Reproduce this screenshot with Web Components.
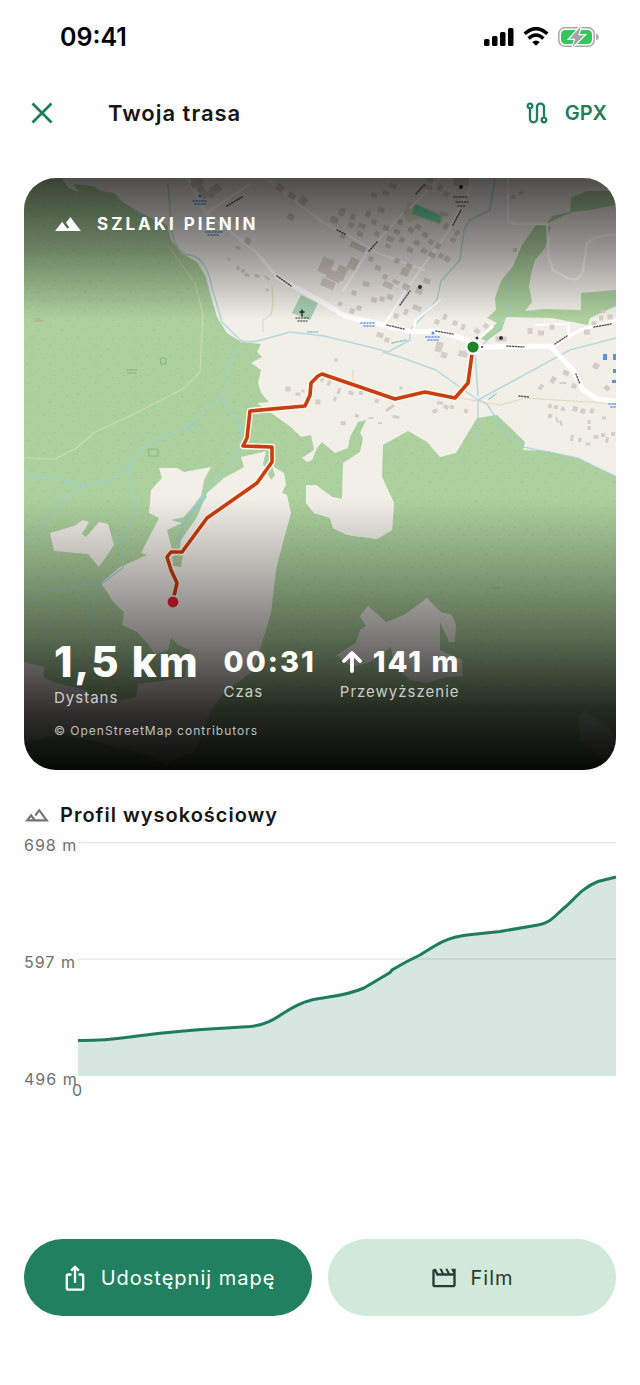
<!DOCTYPE html>
<html lang="pl">
<head>
<meta charset="utf-8">
<meta name="viewport" content="width=device-width, initial-scale=1">
<title>Twoja trasa</title>
<style>
  body { margin: 0; background: #fefefe; color: #151716; font-family: Inter, "Liberation Sans", sans-serif; }
</style>
</head>
<body>
<route-screen></route-screen>

<template id="route-screen">
  <style>
    :host { display: flex; flex-direction: column; min-height: 100vh; }
    main { display: flex; flex-direction: column; padding: 25px 24px 24px; }
    elevation-profile { margin-top: 31px; }
    footer { display: grid; grid-template-columns: 1fr 1fr; gap: 16px; margin-top: auto; padding: 0 24px 69px; }
  </style>
  <status-bar time="09:41"></status-bar>
  <app-bar>Twoja trasa</app-bar>
  <main>
    <route-card>
      <span slot="brand">SZLAKI PIENIN</span>
      <route-stat slot="stats" size="large" label="Dystans">1,5 km</route-stat>
      <route-stat slot="stats" label="Czas">00:31</route-stat>
      <route-stat slot="stats" label="Przewyższenie" climb>141 m</route-stat>
      <span slot="credit">© OpenStreetMap contributors</span>
    </route-card>
    <elevation-profile>Profil wysokościowy</elevation-profile>
  </main>
  <footer>
    <pill-button icon="share">Udostępnij mapę</pill-button>
    <pill-button icon="film" tone="soft">Film</pill-button>
  </footer>
</template>

<template id="status-bar">
  <style>
    :host { display: flex; justify-content: space-between; align-items: center; height: 73px; padding: 0 41px 0 60px; color: #000; }
    time { font-size: 25px; line-height: 28px; font-weight: 600; }
    div { display: flex; align-items: center; gap: 9px; }
    svg { display: block; }
  </style>
  <time></time>
  <div>
    <svg width="30" height="20" viewBox="0 0 30 20" aria-hidden="true">
      <rect x="0" y="12" width="5.5" height="7" rx="1.5"/><rect x="8" y="9" width="5.5" height="10" rx="1.5"/>
      <rect x="16" y="5" width="5.5" height="14" rx="1.5"/><rect x="24" y="1" width="5.5" height="18" rx="1.5"/>
    </svg>
    <svg width="26" height="20" viewBox="0 0 26 20" aria-hidden="true" fill="none" stroke="#000" stroke-width="3.4">
      <path d="M1.6 6.8Q13-3.6 24.4 6.8M5.6 11.4Q13 4.8 20.4 11.4"/><path d="M13 18.8L9.200 15.100Q13 12 16.800 15.100Z" fill="#000" stroke="none"/>
    </svg>
    <svg width="41" height="20" viewBox="0 0 41 20" aria-hidden="true">
      <rect x=".8" y=".8" width="35.4" height="18.4" rx="6" fill="none" stroke="#a5aaa5" stroke-width="1.5"/>
      <path d="M38.2 6.5Q40.8 7.2 40.8 10T38.2 13.5Z" fill="#a5aaa5"/>
      <rect x="3" y="3" width="31" height="14" rx="4.200" fill="#35c759"/>
      <path d="M22.600 -.5L11.500 11.800H17.200L14.600 20L26.200 8.200H20.400Z" fill="#a5a5a7" stroke="#fff" stroke-width="2.4" paint-order="stroke"/>
    </svg>
  </div>
</template>

<template id="app-bar">
  <style>
    :host { display: block; --brand: #1f7d5d; }
    header { display: flex; align-items: center; height: 80px; padding: 0 33px 0 24px; }
    button { display: flex; align-items: center; gap: 14px; margin: 0; padding: 0; border: 0; background: none; color: var(--brand); font: 600 20px/28px Inter, "Liberation Sans", sans-serif; cursor: pointer; }
    .close { width: 84px; height: 36px; }
    h1 { flex: 1; margin: 0; font-size: 22px; line-height: 28px; font-weight: 600; letter-spacing: 1px; }
  </style>
  <header>
    <button class="close" type="button" aria-label="Zamknij">
      <svg width="36" height="36" viewBox="0 0 36 36" fill="none" stroke="currentColor" stroke-width="2.7"><path d="M8.500 8.500L27.500 27.500M27.500 8.500L8.500 27.500"/></svg>
    </button>
    <h1><slot></slot></h1>
    <button type="button">
      <svg width="28" height="28" viewBox="0 0 24 24" fill="currentColor"><path d="M19 15.18V7c0-2.21-1.79-4-4-4s-4 1.79-4 4v10c0 1.1-.9 2-2 2s-2-.9-2-2V8.82C8.16 8.4 9 7.3 9 6c0-1.66-1.34-3-3-3S3 4.34 3 6c0 1.3.84 2.4 2 2.82V17c0 2.21 1.79 4 4 4s4-1.79 4-4V7c0-1.1.9-2 2-2s2 .9 2 2v8.18A2.996 2.996 0 0 0 18 21c1.66 0 3-1.34 3-3 0-1.3-.84-2.4-2-2.82zM6 7c-.55 0-1-.45-1-1s.45-1 1-1 1 .45 1 1-.45 1-1 1zm12 12c-.55 0-1-.45-1-1s.45-1 1-1 1 .45 1 1-.45 1-1 1z"/></svg>
      GPX
    </button>
  </header>
</template>

<template id="route-card">
  <style>
    :host { display: grid; border-radius: 32px; overflow: hidden; color: #fff; }
    trail-map, .over { grid-area: 1 / 1; min-width: 0; }
    .over { position: relative; display: flex; flex-direction: column; padding: 32px 30px 28px;
      background: linear-gradient(rgba(0,0,0,.68) 0%, rgba(0,0,0,.38) 12%, rgba(0,0,0,0) 24%, rgba(0,0,0,0) 54%, rgba(0,0,0,.24) 66%, rgba(0,0,0,.5) 78%, rgba(0,0,0,.8) 90%, rgba(0,0,0,.96) 100%); }
    .brand { display: flex; align-items: center; gap: 15px; font-size: 17px; line-height: 28px; font-weight: 700; letter-spacing: 3px; }
    .stats { display: flex; align-items: center; gap: 24px; margin-top: auto; }
    .credit { margin-top: 9px; font-size: 12px; line-height: 22px; letter-spacing: 1px; color: rgba(255,255,255,.72); }
  </style>
  <trail-map></trail-map>
  <div class="over">
    <div class="brand">
      <svg width="28" height="28" viewBox="0 0 24 24" fill="#fff" aria-hidden="true"><path d="M14 6l-3.75 5 2.85 3.8-1.6 1.2C9.81 13.75 7 10 7 10l-6 8h22L14 6z"/></svg>
      <slot name="brand"></slot>
    </div>
    <div class="stats"><slot name="stats"></slot></div>
    <div class="credit"><slot name="credit"></slot></div>
  </div>
</template>

<template id="route-stat">
  <style>
    :host { display: flex; flex-direction: column; white-space: nowrap; }
    .value { display: flex; align-items: center; gap: 11px; font-size: 29px; line-height: 34px; font-weight: 800; letter-spacing: 2px; }
    :host([size="large"]) .value { font-size: 42px; line-height: 46px; }
    .label { font-size: 15px; line-height: 26px; letter-spacing: 1px; color: rgba(255,255,255,.75); }
    svg { display: none; }
    :host([climb]) svg { display: block; }
  </style>
  <div class="value">
    <svg width="22" height="24" viewBox="0 0 22 24" fill="none" stroke="#fff" stroke-width="3.8" stroke-linecap="round" stroke-linejoin="round" aria-hidden="true"><path d="M12 21V4M4 11L12 3L20 11"/></svg>
    <span><slot></slot></span>
  </div>
  <div class="label"></div>
</template>

<template id="trail-map">
  <style>
    :host { display: block; }
    svg { display: block; width: 100%; height: auto; }
  </style>
  <svg viewBox="24 178 592 592" role="img" aria-label="Mapa trasy" fill="none" stroke-linejoin="round" stroke-linecap="round">
    <defs>
      <pattern id="trees" width="23" height="19" patternUnits="userSpaceOnUse">
        <path d="M3 4l1-2 1 2zM15 8l1-2 1 2zM8 15l1-2 1 2zM20 17l1-2 1 2z" fill="#9ac68e"/>
      </pattern>
      <path id="wood" d="M24 178H62L68 188L79 192L73 184L92 186L104 192L102 200L93 216L93 204L96 190L114 193L124 203L141 213L167 225L171 240L181 253L197 262L206 277L211 297L217 317L227 333L241 342L261 344L257 352L262 357L251 363L261 370L258 383L261 393L269 402L257 403L271 413L291 427L301 437L311 435L314 450L302 458L307 462L312 460L317 448L322 442L335 453L348 448L350 437L358 422L366 420L360 433L363 438L360 452L343 463L342 499L332 497L316 485H306V503L314 513L330 518L333 528L347 535L377 539L392 530L394 503L382 477L383 445L408 431L427 442L440 457L456 453L477 418L497 415L525 442L523 450L547 451L577 458L616 476V770H24Z"/>
      <path id="east" d="M545 226L552 216L570 212L571 198L587 191H616V205L590 210L572 212L550 222ZM536 225L551 226L545 248L535 260L531 274L529 286L532 302L525 311L545 309L581 310V293L616 290V306L590 318L588 325L552 318L506 317L502 330L486 341L480 338L497 323L487 318L496 310L495 298L501 281L513 266L522 245Z"/>
      <path id="route" d="M473 347L468 383L455 398L425 392L395 399L322 374L318 376L311 383L310 395L305 406L250 411L247 438L243 446L272 447V462L257 483L207 518L182 552L171 552L167 557L171 570L177 583L174 596"/>
    </defs>
    <rect x="24" y="178" width="592" height="592" fill="#f2efe9"/>
    <use href="#wood" fill="#add19e"/><use href="#wood" fill="url(#trees)"/>
    <use href="#east" fill="#add19e"/>
    <path d="M301 295L318 303L310 320L292 313Z" fill="#a9cfb2"/>
    <path d="M403 213L408 202L445 214L440 225L420 218L408 222Z" fill="#e3dfc4"/>
    <path d="M415 204L441 216L440 223L412 214Z" fill="#74dfb1"/>

    <g fill="#f2efe9">
      <path d="M306 485L316 485L332 497L342 499L360 470L382 477L394 503L392 530L377 539L347 535L333 528L330 518L314 513L306 503Z"/>
      <path d="M241 457L271 450L274 467L284 473L286 485L282 493L287 495L291 513L281 550L276 570L271 613L254 670L224 693L210 712L196 750L165 765L150 756L100 742L60 734L24 742V662L44 667V678L60 684L86 690L90 697L122 700L136 697L138 684L184 678L190 650L178 645L171 638L168 650L155 654L147 643L137 632L122 625L124 612L114 603L107 592L101 583L120 567L147 555L141 553L159 518L149 513L151 490L162 478L159 468L177 468L184 472L211 467L204 480L201 497L184 517L171 520L182 523L167 530L172 550L178 560L181 540L197 517L207 493L224 478L244 467Z"/>
      <path d="M50 533L74 526L83 520L89 522L82 534L86 537L99 522L108 524L114 545L99 567L88 554L54 551Z"/>
      <path d="M336 655L356 643L360 630L366 626L360 616L368 606L386 622L404 615L427 598L441 612L452 615L456 625L455 642L449 642L440 622L440 650L462 660L463 676L445 677L427 683L410 680L395 667L391 647L370 662L352 667Z"/>
      <path d="M578 718L585 711L611 730L616 738V760L600 758L580 740Z" opacity=".65"/>
    </g>
    <path d="M266 451L263 464L271 480L275 475L272 466L271 450ZM172 556L183 555L181 567L173 566Z" fill="#add19e"/>

    <g stroke="#9fd0d6" stroke-width="1.5" opacity=".7">
      <path d="M168 184L171 225Q174 254 190 255Q207 258 212 288L222 322L240 340Q248 344 265 339L290 332L324 336L370 347L388 352L410 340L410 330L423 316L437 300L441 281L460 260L464 230L470 220L490 210L495 178"/>
      <path d="M383 352L400 357L436 370L478 400L487 404L503 430L523 447L578 458L616 477M478 400L535 369L570 350L616 338M478 396L475 352L492 336L508 314L512 298L507 280L513 267M478 400V440"/>
      <path d="M237 347L228 367L227 386L220 398L205 410L187 427L144 446L128 468L112 480L86 485L65 498L40 525L25 542M25 479L40 477L86 484M220 399L239 421L242 438L239 452L225 470L210 485L197 502L184 523L178 544M129 467L136 510L121 540L123 568L97 587L93 600L94 650M24 606L48 591L96 583M60 603L36 650"/>
      <path d="M514 646L540 636L570 635L590 628L616 626" opacity=".4"/>
    </g>
    <path d="M205 497L184 523L178 543M187 428L193 424" stroke="#9dccc0" stroke-width="3"/>
    <path d="M168 246L195 283L203 315L200 372L183 389L130 416L95 432L75 449L55 459L24 458M459 398L500 405L525 398L620 404M353 370V382M272 286L273 303L271 315L263 320V332" stroke="#dbd9ae" stroke-width="1.200" opacity=".8"/>

    <g stroke="#fff">
      <path d="M320 221L350 236L375 252L424 270M403 213L366 254L343 291M470 188L458 210L448 232L420 270L404 293L384 325M508 178V222L516 224H547L549 258L553 270L567 278Q580 283 583 270L587 243L597 237L616 234M265 178L300 205L322 221M206 213L250 184M440 178L410 208M413 332L416 320L440 300M536 325L569 324L568 335L555 346" stroke-width="2.200"/>
      <path d="M188 178L206 213L237 237L257 253L277 277" stroke-width="3"/>
      <path d="M277 277L324 303L345 316L383 325L413 332L437 331L462 338L473 344L483 347L550 346L573 370L583 390L597 399L620 402" stroke-width="5"/>
      <path d="M555 345L580 330L616 320M475 342L492 327" stroke-width="3"/>
    </g>

    <g id="houses" fill="#d6cdc6"></g>
    <g stroke="#454545" stroke-width="1.500" stroke-dasharray="1 1.800" opacity=".9">
      <path d="M277 276L291 286M387 325L404 329M436 331L453 334M507 346L524 347M400 305L410 291M555 344L567 336M594 327L611 324M519 396L529 397M576 374L580 384M227 206L242 197M337 230L345 234M369 251L377 242M416 194L425 184M453 225L461 210"/>
    </g>
    <path d="M302 310V316M300 312H304" stroke="#222" stroke-width="1.400"/>
    <path d="M296 318H309M298 321H307M454 197H466M456 202H468M458 206H465" stroke="#474747" stroke-width="1.500" stroke-dasharray="1 1.800" opacity=".8"/>
    <g fill="#333">
      <circle cx="461" cy="187" r="2"/><circle cx="420" cy="287" r="2"/><circle cx="501" cy="338" r="2"/><circle cx="477" cy="338" r="1.500"/><circle cx="482" cy="347" r="1"/>
    </g>
    <g stroke="#5c8fdd" stroke-width="1.600" stroke-dasharray="1 2">
      <path d="M193 201H207M195 204H205M206 232H222M208 235H220M361 323H376M364 326H374M426 337H440M428 340H438M609 404H616M611 407H616"/>
    </g>
    <g fill="#5c8fdd">
      <circle cx="200" cy="196" r="1.500"/><circle cx="214" cy="229" r="1.500"/><circle cx="433" cy="333" r="1.500"/>
      <path d="M603 354h4v6h-4zM613 354h3v6h-3zM613 369h3v4h-3zM612 380h4v3h-4z"/>
    </g>
    <g stroke="#84c5be" stroke-width="1.500" stroke-dasharray="1 1.800"><path d="M308 332H319M392 343L406 340M489 399L496 394"/></g>
    <g stroke="#6eac77" stroke-width="1" opacity=".65"><rect x="149" y="449" width="9" height="7"/><rect x="161" y="358" width="5" height="6"/></g>
    <path d="M127 370H137M128 373H136" stroke="#886" stroke-width="1" opacity=".6"/>
    <path d="M34 321H42M36 319H40M492 588H500" stroke="#c38b77" stroke-width="1" opacity=".7"/>

    <use href="#route" stroke="#fff6e8" stroke-width="6.500"/>
    <use href="#route" stroke="#c83d12" stroke-width="3.600"/>
    <circle cx="473" cy="347" r="8" fill="#fff"/><circle cx="473" cy="347" r="5.600" fill="#1f8326"/>
    <circle cx="173" cy="602" r="7" fill="#f2efe9"/><circle cx="173" cy="602" r="5.400" fill="#f3242c"/>
  </svg>
</template>

<template id="elevation-profile">
  <style>
    :host { display: block; color: #6b716f; }
    h2 { display: flex; align-items: center; gap: 10px; margin: 0; color: #151716; font-size: 20px; line-height: 28px; font-weight: 600; letter-spacing: 1px; }
    h2 svg { color: #6f7774; }
    .chart { display: grid; grid-template-columns: 54px minmax(0, 1fr); margin-top: 13px; font-size: 16px; letter-spacing: 1px; }
    .scale { display: flex; flex-direction: column; justify-content: space-between; height: 240px; line-height: 6px; white-space: nowrap; }
    .plot { display: block; width: 100%; height: 234px; }
    .origin { grid-column: 2; margin-left: -6px; line-height: 16px; }
  </style>
  <h2>
    <svg width="26" height="26" viewBox="0 0 24 24" fill="currentColor" aria-hidden="true"><path d="M14 6l-4.22 5.63 1.25 1.67L14 9.33 19 16h-8.46l-4.01-5.37L1 18h22L14 6zM5 16l1.52-2.03L8.04 16H5z"/></svg>
    <slot></slot>
  </h2>
  <div class="chart">
    <div class="scale"><span>698 m</span><span>597 m</span><span>496 m</span></div>
    <svg class="plot" viewBox="78 842 538 234" preserveAspectRatio="none" role="img" aria-label="Wykres wysokości" overflow="visible">
      <path d="M78 842.500H616M78 959H616" stroke="#e6e8e7" stroke-width="1.400"/>
      <path d="M78 1040.500C112 1041 125 1037 150 1034.500S190 1030 210 1029L250 1026.500C278 1024 284 1007 310 1000.500C328 996 343 997 364 988L390 972.500L392 970L406 962L420 955C434 947 443 938 467 935L500 931.500L538 925C551 923 554 916 567 905.500C577 896 584 887 598 881.500L616 877V1076H78Z" fill="#1f7d5d" fill-opacity=".18"/>
      <path d="M78 1040.500C112 1041 125 1037 150 1034.500S190 1030 210 1029L250 1026.500C278 1024 284 1007 310 1000.500C328 996 343 997 364 988L390 972.500L392 970L406 962L420 955C434 947 443 938 467 935L500 931.500L538 925C551 923 554 916 567 905.500C577 896 584 887 598 881.500L616 877" fill="none" stroke="#1f7d5d" stroke-width="3"/>
    </svg>
    <span class="origin">0</span>
  </div>
</template>

<template id="pill-button">
  <style>
    :host { display: block; }
    button { display: flex; align-items: center; justify-content: center; gap: 12px; width: 100%; height: 77px; margin: 0; padding: 0; border: 0; border-radius: 39px; background: #208060; color: #fff; font: 400 20px/28px Inter, "Liberation Sans", sans-serif; letter-spacing: 1px; cursor: pointer; }
    :host([tone="soft"]) button { background: #d0e9da; color: #293c32; }
    svg { display: none; }
    :host([icon="share"]) .share, :host([icon="film"]) .film { display: block; }
  </style>
  <button type="button">
    <svg class="share" width="28" height="28" viewBox="0 0 24 24" fill="currentColor"><path d="M16 5l-1.420 1.420-1.590-1.590V16h-1.980V4.830L9.420 6.420 8 5l4-4 4 4zm4 5v11c0 1.100-.9 2-2 2H6c-1.110 0-2-.9-2-2V10c0-1.110.89-2 2-2h3v2H6v11h12V10h-3V8h3c1.100 0 2 .89 2 2z"/></svg>
    <svg class="film" width="28" height="28" viewBox="0 0 24 24" fill="currentColor"><path d="M4 6.470L5.760 10H20v8H4V6.470M22 4h-4l2 4h-3l-2-4h-2l2 4h-3l-2-4H8l2 4H7L5 4H4c-1.100 0-2 .9-2 2v12c0 1.100.9 2 2 2h16c1.100 0 2-.9 2-2V4z"/></svg>
    <slot></slot>
  </button>
</template>

<script>
  class TemplateElement extends HTMLElement {
    constructor() {
      super();
      this.attachShadow({ mode: 'open' });
      this.shadowRoot.append(document.getElementById(this.localName).content.cloneNode(true));
    }
  }

  class StatusBar extends TemplateElement {
    connectedCallback() { this.shadowRoot.querySelector('time').textContent = this.getAttribute('time'); }
  }

  class RouteStat extends TemplateElement {
    connectedCallback() { this.shadowRoot.querySelector('.label').textContent = this.getAttribute('label'); }
  }

  class TrailMap extends TemplateElement {
    // each house: centre x, centre y, width, height, rotation in degrees
    static houses = [
      [326,266,12,16,25],[334,276,15,9,25],[341,273,10,14,25],[353,264,9,12,25],[328,284,14,8,25],[358,247,16,6,25],[343,236,6,5,25],[334,220,8,6,20],[342,212,6,8,20],[353,217,5,6,20],[362,226,7,5,20],[351,225,6,5,20],[368,214,5,6,20],[374,222,5,5,20],[381,210,7,5,20],[360,234,6,5,20],[377,234,5,5,20],[386,228,6,5,20],[390,239,7,5,20],[388,246,5,4,20],[397,232,6,5,20],[400,222,5,5,20],[402,240,5,5,30],[411,230,6,5,30],[418,227,6,5,30],[425,235,6,5,30],[431,242,5,5,30],[417,243,6,5,30],[410,250,6,5,30],[424,251,6,5,30],[432,255,7,5,30],[438,246,5,6,30],[441,256,5,5,30],[447,259,6,6,40],[453,240,5,5,40],[457,233,4,6,40],[446,226,5,6,40],[405,272,8,8,25],[409,266,6,5,25],[397,261,5,5,25],[385,277,5,5,25],[378,268,6,5,20],[371,259,5,5,20],[366,284,7,5,20],[354,293,5,5,20],[388,285,10,6,25],[396,282,7,4,25],[406,287,7,6,25],[419,291,7,6,20],[427,281,7,5,20],[374,300,6,5,25],[382,299,5,5,25],[390,297,6,5,20],[359,308,5,5,20],[352,311,5,5,20],[340,304,4,4,20],[396,316,5,5,20],[406,312,4,6,20],[417,308,9,5,20],[437,322,5,5,20],[445,317,4,6,20],[455,323,5,5,20],[463,327,4,6,20],[477,331,6,5,40],[486,326,5,5,40],[439,347,7,10,15],[444,355,6,6,15],[463,354,9,6,15],[467,350,4,7,15],[380,335,7,5,15],[387,340,5,5,15],[501,339,11,5,0],[530,331,5,6,0],[541,333,6,5,0],[552,327,5,5,0],[587,332,6,5,0],[594,323,5,4,0],[603,311,4,4,0],[601,318,4,5,0],[610,317,5,5,0],[596,366,6,6,30],[541,387,4,6,30],[553,380,5,7,30],[563,383,7,2,0],[566,373,6,5,20],[574,386,5,5,20],[607,388,6,5,40],[550,406,4,4,20],[556,407,4,4,20],[563,409,4,4,20],[575,409,5,5,20],[583,411,5,5,20],[592,411,4,5,20],[550,416,4,4,20],[557,420,2,6,-20],[561,423,2,5,-20],[589,422,3,4,0],[589,428,3,4,0],[604,418,4,3,0],[572,438,3,6,10],[580,440,3,4,10],[588,444,5,3,0],[596,437,5,4,0],[603,435,4,4,0],[607,440,3,6,10],[613,434,4,4,0],[203,192,6,14,-35],[216,189,10,8,-35],[211,194,6,8,-35],[197,180,12,6,30],[280,188,8,7,35],[292,196,8,6,35],[303,201,8,8,35],[291,217,7,6,35],[248,241,6,6,35],[238,248,5,3,20],[229,259,2,3,0],[238,268,3,4,20],[243,271,3,4,30],[247,275,5,3,20],[257,276,5,3,20],[267,278,6,2,40],[267,290,3,3,0],[288,389,5,5,0],[298,394,5,3,0],[303,391,3,3,0],[318,402,5,5,0],[322,380,3,4,30],[329,383,3,5,30],[339,391,3,6,20],[335,399,3,4,20],[351,393,5,4,20],[361,393,4,4,0],[377,401,4,4,20],[390,408,10,3,-35],[396,417,7,3,10],[343,423,5,4,0],[357,416,4,3,30],[371,418,5,2,0],[380,423,4,2,0],[440,403,6,3,0],[446,407,5,4,20],[452,407,4,4,20],[435,411,5,4,-20],[466,411,4,4,20],[401,388,3,3,0],[336,360,3,3,0],[440,188,5,6,20],[446,194,5,5,20],[386,193,7,4,20],[393,186,7,5,20],[444,214,9,4,15],[428,187,8,4,15],[430,180,6,4,20],[374,195,6,4,20],[515,250,4,4,0],[521,193,5,3,-20],[513,197,4,4,0],[461,182,15,8,0],[195,184,8,6,-25]
    ];
    connectedCallback() {
      const group = this.shadowRoot.getElementById('houses');
      for (const [x, y, w, h, turn] of TrailMap.houses) {
        const house = document.createElementNS('http://www.w3.org/2000/svg', 'rect');
        house.setAttribute('x', x - w / 2);
        house.setAttribute('y', y - h / 2);
        house.setAttribute('width', w);
        house.setAttribute('height', h);
        house.setAttribute('transform', `rotate(${turn} ${x} ${y})`);
        group.append(house);
      }
    }
  }

  customElements.define('status-bar', StatusBar);
  customElements.define('app-bar', class extends TemplateElement {});
  customElements.define('trail-map', TrailMap);
  customElements.define('route-stat', RouteStat);
  customElements.define('route-card', class extends TemplateElement {});
  customElements.define('elevation-profile', class extends TemplateElement {});
  customElements.define('pill-button', class extends TemplateElement {});
  customElements.define('route-screen', class extends TemplateElement {});
</script>
</body>
</html>
